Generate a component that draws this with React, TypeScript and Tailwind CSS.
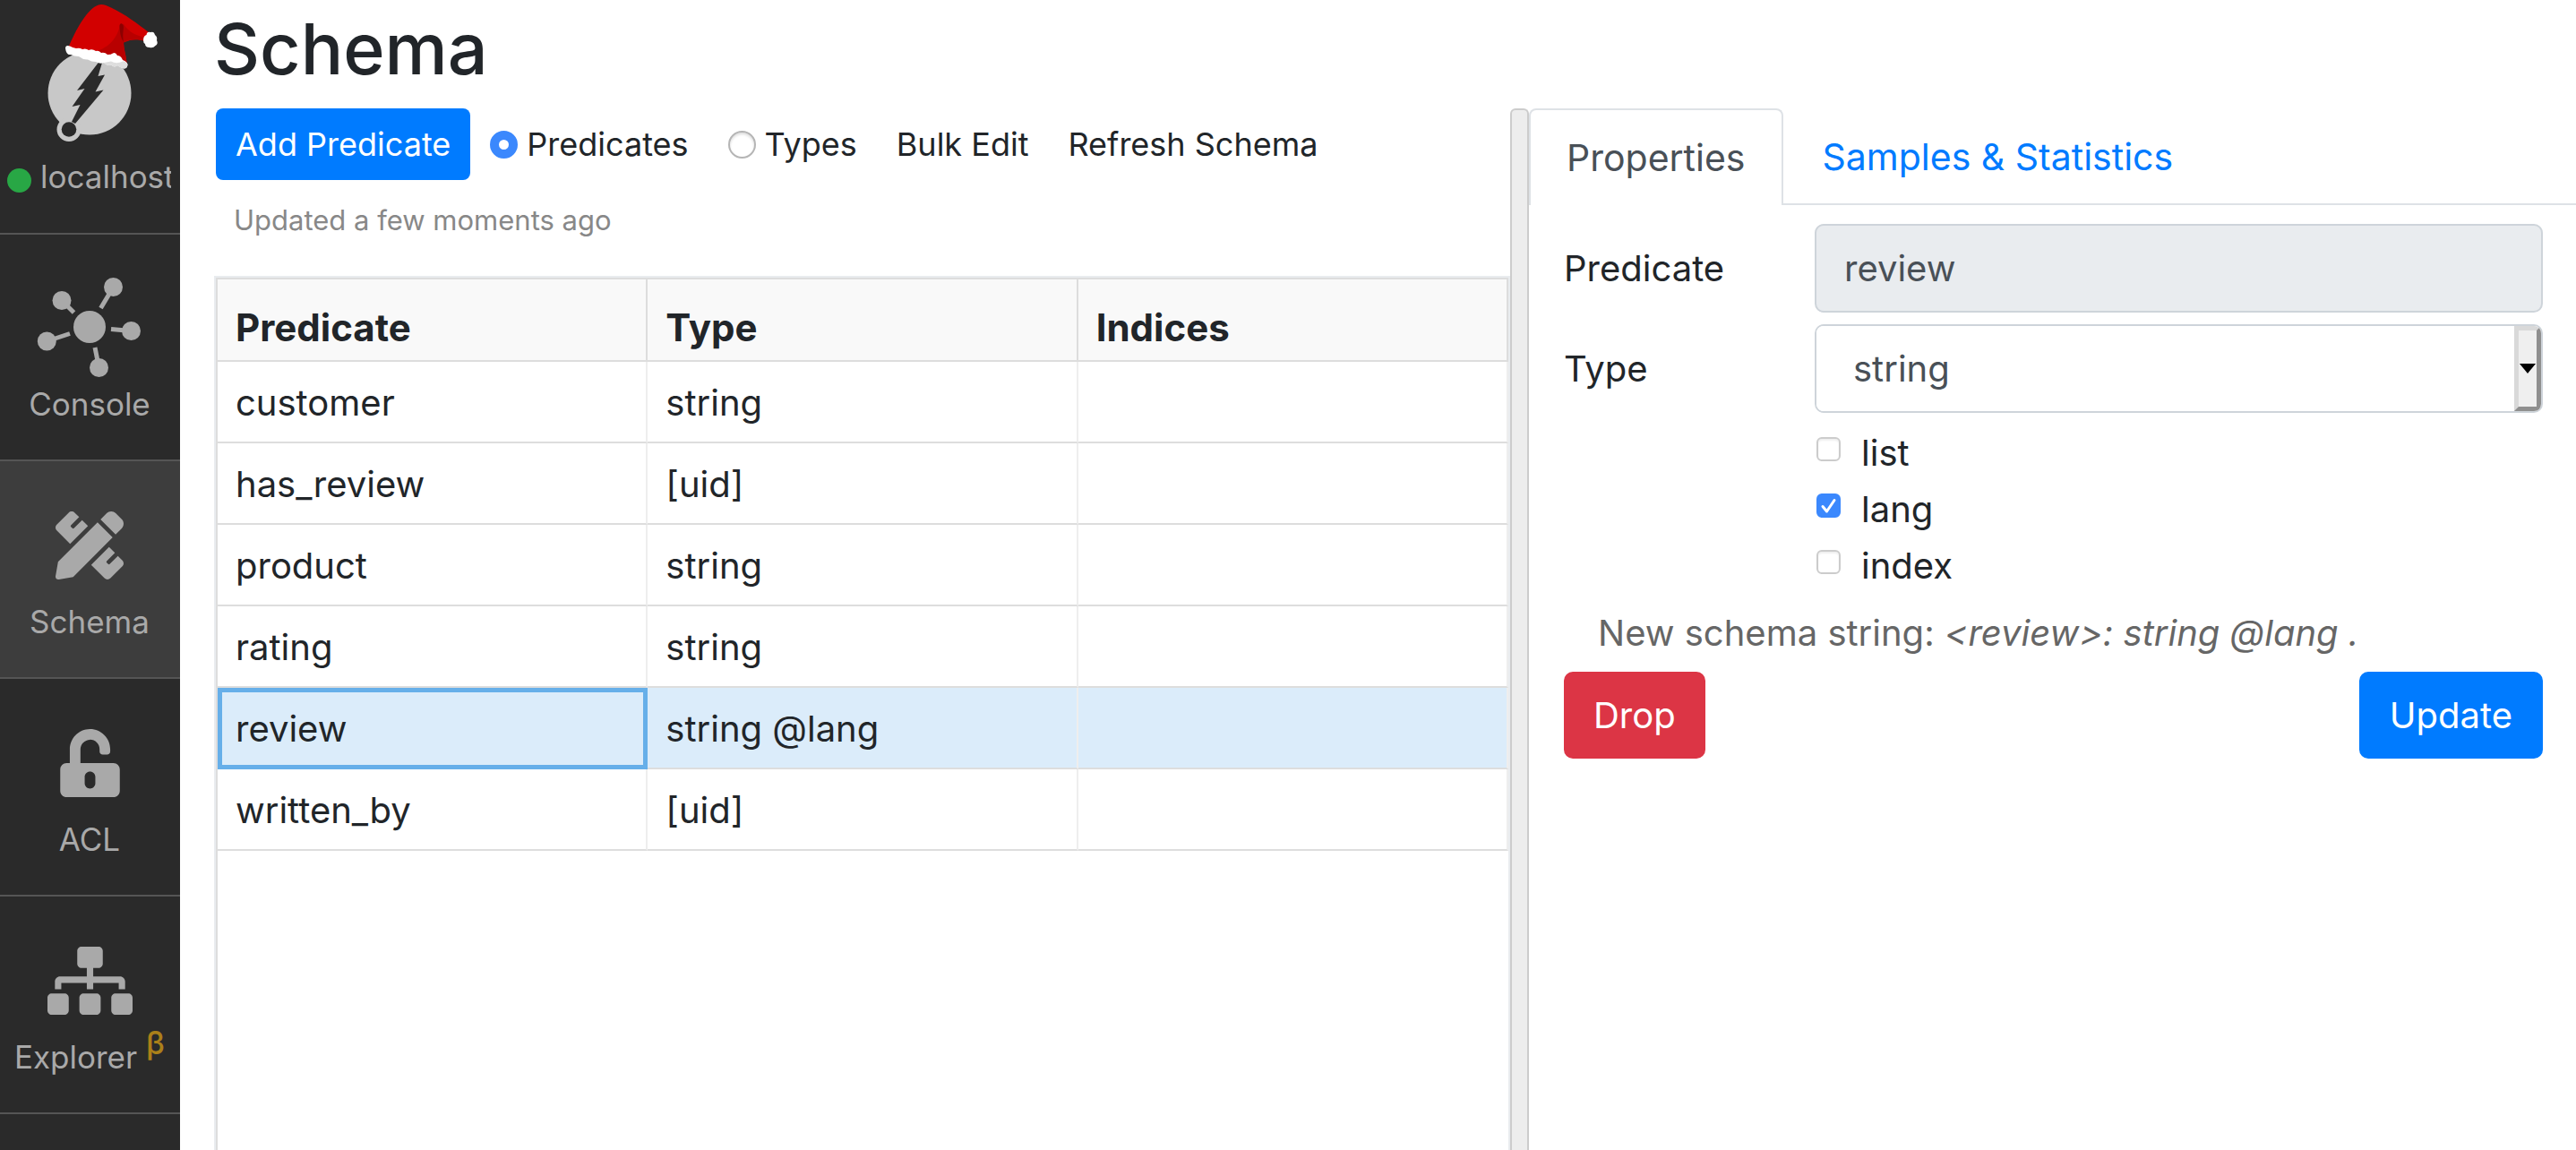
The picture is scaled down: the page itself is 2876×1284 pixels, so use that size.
import { useState } from "react";
import type { ReactNode } from "react";
import { FaPencilRuler, FaSitemap, FaUnlockAlt } from "react-icons/fa";

function Logo() {
  return (
    <svg viewBox="0 0 201 160" className="block w-full" role="img" aria-label="Ratel logo">
      <circle cx="100" cy="104" r="46.5" fill="#c8c8c8" />
      <circle cx="77" cy="144.5" r="13.5" fill="#c8c8c8" />
      <path
        d="M110.500 69 L114 70 L109.500 85 L117 83.500 L106.500 102.500 L115.500 100.500 L84 138 L80 136 L89.500 117 L80.500 119 L94.500 99 L86 101 Z"
        fill="#2a2a2a"
      />
      <circle cx="77" cy="144.500" r="8.300" fill="#2a2a2a" />
      <path
        d="M76 54 C84 34 98 9 110 5.500 C114 4 119 6 124 8.500 C140 16 154 27 166 36 L162 46 C153 43 146 44 138 47.500 C138 55 141 62 141.500 70 C118 66 96 62 76 54 Z"
        fill="#d20000"
      />
      <path
        d="M134 28 C130 46 118 56 98 60 L141.500 71 C141 62 138 55 138 47.500 C146 43 153 44 162 45.500 L163 42 C152 40 144 36 138 27 Z"
        fill="#b80000"
      />
      <path d="M133.500 30 C133 26 136 25 137.500 28 C139 32 136 36 138 47 C134 41 134 35 133.500 30 Z" fill="#8c0000" />
      <path
        d="M73 54 Q73 50 78 51.500 Q81 53 85 54 Q89 53 92 55 Q96 53.500 99 56 Q103 54 107 57 Q110 56 113 59 Q117 58 120 61 Q124 61 126 59.500 Q129 58 131 62 Q135 62 137 67 Q142 69 142.500 72 Q142 77 138 76.500 Q134 75 131 73 Q128 76 124 72.500 Q119 74 116 70 Q112 72 107 69 Q102 69 98 66.500 Q93 67 88 63 Q83 63 79 61 Q74 62 73 54 Z"
        fill="#ffffff"
      />
      <path d="M116 70 Q119 74 124 72.500 Q128 76 131 73 Q134 75 138 76.500 Q142 77 142.500 72 Q141 68 137 68.500 Q130 72 124 68.500 Z" fill="#dedede" />
      <path
        d="M160 45 Q160 40 163.500 39 Q164 35 168 36 Q172 34.500 173 39 Q176 41 175 45 Q177 49 173.500 51 Q171 54 167 53 Q162 53 162 49 Q160 48 160 45 Z"
        fill="#ffffff"
      />
    </svg>
  );
}

function ConsoleIcon() {
  return (
    <svg viewBox="41 55 118 118" className="size-[118px]" fill="currentColor" stroke="currentColor" aria-hidden="true">
      <g strokeWidth="5">
        <path d="M126.500 69.500 L112.500 93" />
        <path d="M69 84.500 L82.500 98" />
        <path d="M52.300 130 L78 121.500" />
        <path d="M146.500 118.500 L124 116.500" />
        <path d="M110.500 159.500 L106 137" />
      </g>
      <g stroke="none">
        <circle cx="100" cy="114" r="18" />
        <circle cx="126.500" cy="69.500" r="10.500" />
        <circle cx="69" cy="84.500" r="10.500" />
        <circle cx="52.300" cy="130" r="10.500" />
        <circle cx="146.500" cy="118.500" r="10.500" />
        <circle cx="110.500" cy="159.500" r="10.500" />
      </g>
    </svg>
  );
}

function NavItem({ icon, active, children }: { icon: ReactNode; active?: boolean; children: ReactNode }) {
  return (
    <a
      href="#"
      className={`flex shrink-0 flex-col items-center border-b-2 border-[#555] pr-px pb-[35px] ${active ? "bg-[#3d3d3d]" : ""}`}
    >
      {icon}
      <span className="h-[54px] leading-[54px] whitespace-nowrap">{children}</span>
    </a>
  );
}

function Sidebar() {
  return (
    <nav className="flex w-[201px] shrink-0 flex-col overflow-hidden bg-[#2a2a2a] text-[35px] text-[#a9a9a9]">
      <a href="#" className="block shrink-0 border-b-2 border-[#555] pb-9">
        <Logo />
        <span className="mt-2.5 mr-2.5 flex items-center gap-2.5 overflow-hidden pl-2 leading-[54px]">
          <span className="mt-2 size-[27px] shrink-0 rounded-full bg-[#28a745]" />
          localhost
        </span>
      </a>
      <NavItem icon={<span className="pt-11"><ConsoleIcon /></span>}>Console</NavItem>
      <NavItem active icon={<FaPencilRuler className="mt-14 mb-5 h-[76px] w-[76px]" />}>Schema</NavItem>
      <NavItem icon={<FaUnlockAlt className="mt-14 mb-5 h-[76px] w-[67px]" />}>ACL</NavItem>
      <NavItem icon={<FaSitemap className="mt-14 mb-5 h-[76px] w-[95px]" />}>
        Explorer <sup className="-top-4 text-[35px] leading-none font-medium text-[#ab8019]">β</sup>
      </NavItem>
    </nav>
  );
}

function ViewRadio({ label, checked, onChange }: { label: string; checked: boolean; onChange: () => void }) {
  return (
    <label className="flex items-center gap-2.5">
      <input
        type="radio"
        name="view"
        checked={checked}
        onChange={onChange}
        className="size-[31px] appearance-none rounded-full border-2 border-[#b5b5b5] bg-white shadow-[inset_0_2px_3px_#0002] checked:border-[10px] checked:border-[#3b88fd] checked:shadow-none"
      />
      {label}
    </label>
  );
}

const rows = [
  ["customer", "string"],
  ["has_review", "[uid]"],
  ["product", "string"],
  ["rating", "string"],
  ["review", "string @lang"],
  ["written_by", "[uid]"],
];

function PredicateTable({ selected, onSelect }: { selected: string; onSelect: (name: string) => void }) {
  return (
    <div className="flex-1 border-2 border-b-0 border-[#e9ecef]">
      <div className="h-full border-2 border-r-0 border-b-0 border-[#ddd]">
        <table className="w-full table-fixed border-separate border-spacing-0 text-left text-[40px] leading-[60px]">
          <thead>
            <tr className="h-[92px] bg-[#f9f9f9]">
              {["Predicate", "Type", "Indices"].map((h) => (
                <th
                  key={h}
                  scope="col"
                  className="border-r-2 border-b-2 border-[#ddd] px-5 pt-6 pb-1.5 text-[42px] leading-[60px] font-bold"
                >
                  {h}
                </th>
              ))}
            </tr>
          </thead>
          <tbody>
            {rows.map(([name, type]) => {
              const on = name === selected;
              const cell = "border-r-2 border-b-2 border-r-[#eee] border-b-[#ddd] px-5 pt-0.5";
              return (
                <tr key={name} onClick={() => onSelect(name)} className={`h-[91px] ${on ? "bg-[#dbecfa]" : ""}`}>
                  <td
                    className={
                      on
                        ? "border-r-2 border-b-2 border-[#66afe9] px-5 pt-0.5 shadow-[inset_5px_5px_#66afe9,inset_-3px_-3px_#66afe9]"
                        : cell
                    }
                  >
                    {name}
                  </td>
                  <td className={cell}>{type}</td>
                  <td className={cell} />
                </tr>
              );
            })}
          </tbody>
        </table>
      </div>
    </div>
  );
}

function CheckRow({ label, defaultChecked }: { label: string; defaultChecked?: boolean }) {
  return (
    <label className="flex items-start gap-[23px] pl-0.5 leading-[63px]">
      <span className="mt-3.5 grid size-[27px]">
        <input
          type="checkbox"
          defaultChecked={defaultChecked}
          className="peer col-start-1 row-start-1 size-[27px] appearance-none rounded-[6px] border-2 border-[#ccc] bg-white shadow-[inset_0_2px_2px_#0001] checked:border-[#3b88fd] checked:bg-[#3b88fd] checked:shadow-none"
        />
        <svg
          viewBox="0 0 27 27"
          className="pointer-events-none invisible col-start-1 row-start-1 size-[27px] peer-checked:visible"
          fill="none"
          stroke="white"
          strokeWidth="3"
          strokeLinecap="round"
          strokeLinejoin="round"
          aria-hidden="true"
        >
          <path d="M7 14.500 L11.500 20 L20 7.500" />
        </svg>
      </span>
      {label}
    </label>
  );
}

function PropertiesPanel({ selected }: { selected: string }) {
  return (
    <section className="min-w-0 text-[40px] leading-[63px]">
      <div role="tablist" className="flex h-[108px] border-b-2 border-[#dee2e6] text-[41px]">
        <button
          role="tab"
          aria-selected="true"
          className="-mb-0.5 rounded-t-lg border-2 border-b-0 border-[#dee2e6] bg-white px-10 text-[#495057]"
        >
          Properties
        </button>
        <button role="tab" aria-selected="false" className="px-11 pt-0.5 text-[#007bff]">
          Samples &amp; Statistics
        </button>
      </div>
      <form className="flex flex-col gap-3 pt-[21px] pr-[37px] pl-[39px]" onSubmit={(e) => e.preventDefault()}>
        <div className="grid grid-cols-[280px_1fr] items-center gap-y-[13px]">
          <label htmlFor="predicate">Predicate</label>
          <input
            id="predicate"
            type="text"
            disabled
            value={selected}
            className="h-[99px] w-full rounded-[10px] border-2 border-[#ced4da] bg-[#e9ecef] px-[31px] text-[#495057]"
          />
          <label htmlFor="type">Type</label>
          <div className="grid overflow-hidden rounded-[10px] border-2 border-[#ced4da]">
            <select
              id="type"
              defaultValue="string"
              className="col-start-1 row-start-1 h-[95px] w-full appearance-none bg-white px-[41px] text-[#495057]"
            >
              <option>string</option>
              <option>int</option>
              <option>uid</option>
            </select>
            <span className="pointer-events-none col-start-1 row-start-1 flex w-[30px] items-center justify-center justify-self-end border-[5px] border-t-[#d9d9d9] border-r-[#8f8f8f] border-b-[#8f8f8f] border-l-[#d9d9d9] bg-[#efefef]">
              <svg viewBox="0 0 18 11" className="w-[18px] shrink-0" aria-hidden="true">
                <path d="M0 0 H18 L9 11 Z" fill="#000" />
              </svg>
            </span>
          </div>
          <div className="col-start-2">
            <CheckRow label="list" />
            <CheckRow label="lang" defaultChecked />
            <CheckRow label="index" />
          </div>
        </div>
        <p className="pl-[38px] text-[#666]">
          New schema string: <em>&lt;{selected}&gt;: string @lang .</em>
        </p>
        <div className="flex justify-between text-white">
          <button type="button" className="h-[97px] rounded-[10px] bg-[#dc3545] px-[33px]">
            Drop
          </button>
          <button type="submit" className="h-[97px] rounded-[10px] bg-[#007bff] px-[34px]">
            Update
          </button>
        </div>
      </form>
    </section>
  );
}

export default function App() {
  const [view, setView] = useState("Predicates");
  const [selected, setSelected] = useState("review");
  return (
    <div className="flex h-screen overflow-hidden bg-white font-['Inter',sans-serif] text-[#212529]">
      <Sidebar />
      <main className="flex min-w-0 flex-1 flex-col pt-1.5 pl-[38px]">
        <h1 className="pb-[19px] text-[79px] leading-[96px] font-medium">Schema</h1>
        <div className="grid flex-1 grid-cols-[1447fr_21px_1169fr]">
          <section className="flex min-w-0 flex-col">
            <div className="flex h-20 items-center pl-0.5 text-[36px]">
              <button className="mr-[22px] h-20 rounded-lg bg-[#007bff] px-[22px] text-white">Add Predicate</button>
              <div className="flex items-center gap-11">
                <ViewRadio label="Predicates" checked={view === "Predicates"} onChange={() => setView("Predicates")} />
                <ViewRadio label="Types" checked={view === "Types"} onChange={() => setView("Types")} />
                <button>Bulk Edit</button>
                <button>Refresh Schema</button>
              </div>
            </div>
            <p className="pt-[21px] pb-[39px] pl-[22px] text-[31px] leading-[47px] text-[#888]">
              Updated a few moments ago
            </p>
            <PredicateTable selected={selected} onSelect={setSelected} />
          </section>
          <div role="separator" className="rounded-t-md border-2 border-b-0 border-[#ccc] bg-[#ededed]" />
          <PropertiesPanel selected={selected} />
        </div>
      </main>
    </div>
  );
}
